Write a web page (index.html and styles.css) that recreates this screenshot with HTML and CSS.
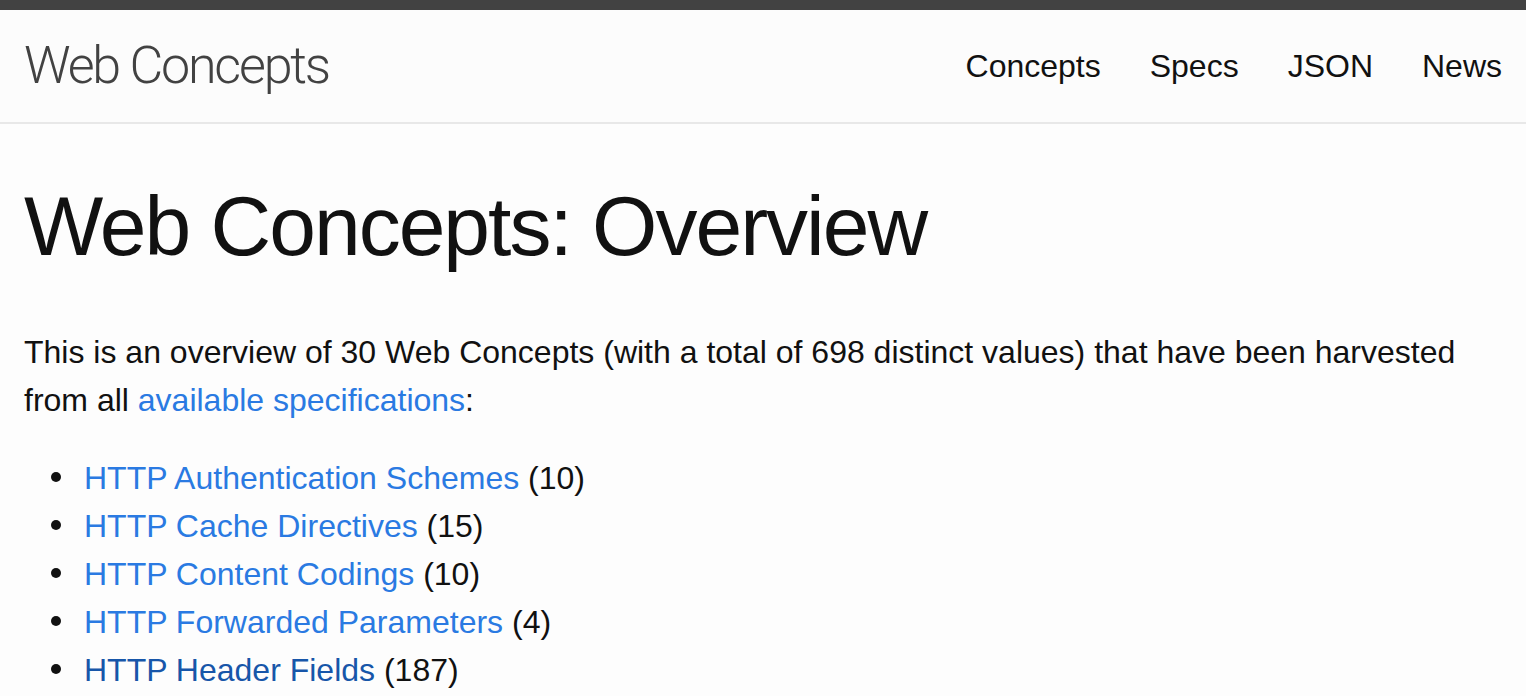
FILE: index.html
```html
<!DOCTYPE html>
<html lang="en">
<head>
<meta charset="utf-8">
<title>Web Concepts: Overview</title>
<link rel="stylesheet" href="styles.css">
</head>
<body>
<header class="site-header">
  <div class="wrapper header-inner">
    <a class="site-title" href="#">Web Concepts</a>
    <nav class="site-nav">
      <a class="page-link" href="#">Concepts</a>
      <a class="page-link" href="#">Specs</a>
      <a class="page-link" href="#">JSON</a>
      <a class="page-link" href="#">News</a>
    </nav>
  </div>
</header>
<main class="page-content">
  <div class="wrapper">
    <h1 class="page-heading">Web Concepts: Overview</h1>
    <p class="intro">This is an overview of 30 Web Concepts (with a total of 698 distinct values) that have been harvested from all <a href="#">available specifications</a>:</p>
    <ul class="concept-list">
      <li><a href="#">HTTP Authentication Schemes</a> (10)</li>
      <li><a href="#">HTTP Cache Directives</a> (15)</li>
      <li><a href="#">HTTP Content Codings</a> (10)</li>
      <li><a href="#">HTTP Forwarded Parameters</a> (4)</li>
      <li><a class="visited" href="#">HTTP Header Fields</a> (187)</li>
      <li><a href="#">HTTP Link Relations</a> (60)</li>
    </ul>
  </div>
</main>
</body>
</html>
```

FILE: styles.css
```css
html, body {
  margin: 0;
  padding: 0;
}
body {
  background: #fdfdfd;
  color: #111;
  font-family: "Liberation Sans", Arial, sans-serif;
  font-size: 32px;
  line-height: 48px;
}
a {
  color: #2a7ae2;
  text-decoration: none;
}
a.visited {
  color: #1756a9;
}
.wrapper {
  padding: 0 24px;
}
.site-header {
  border-top: 10px solid #424242;
  border-bottom: 2px solid #e8e8e8;
  background: #fcfcfc;
}
.header-inner {
  display: flex;
  justify-content: space-between;
  align-items: center;
  height: 112px;
}
.site-title {
  font-family: Roboto, "Liberation Sans", sans-serif;
  font-weight: 300;
  font-size: 52px;
  line-height: 112px;
  letter-spacing: -2.2px;
  color: #424242;
}
.site-nav {
  display: flex;
  gap: 49px;
}
.page-link {
  color: #111;
  line-height: 112px;
}
.page-content {
  padding: 60px 0;
}
.page-heading {
  margin: 0 0 60px;
  font-size: 84px;
  line-height: 84px;
  font-weight: 400;
  letter-spacing: -2px;
}
.intro {
  margin: 0 0 30px;
}
.concept-list {
  margin: 0 0 0 60px;
  padding: 0;
  list-style: none;
}
.concept-list li::before {
  content: "";
  display: inline-block;
  width: 10px;
  height: 10px;
  border-radius: 50%;
  background: #111;
  margin-left: -33px;
  margin-right: 23px;
  vertical-align: 7px;
}
```
